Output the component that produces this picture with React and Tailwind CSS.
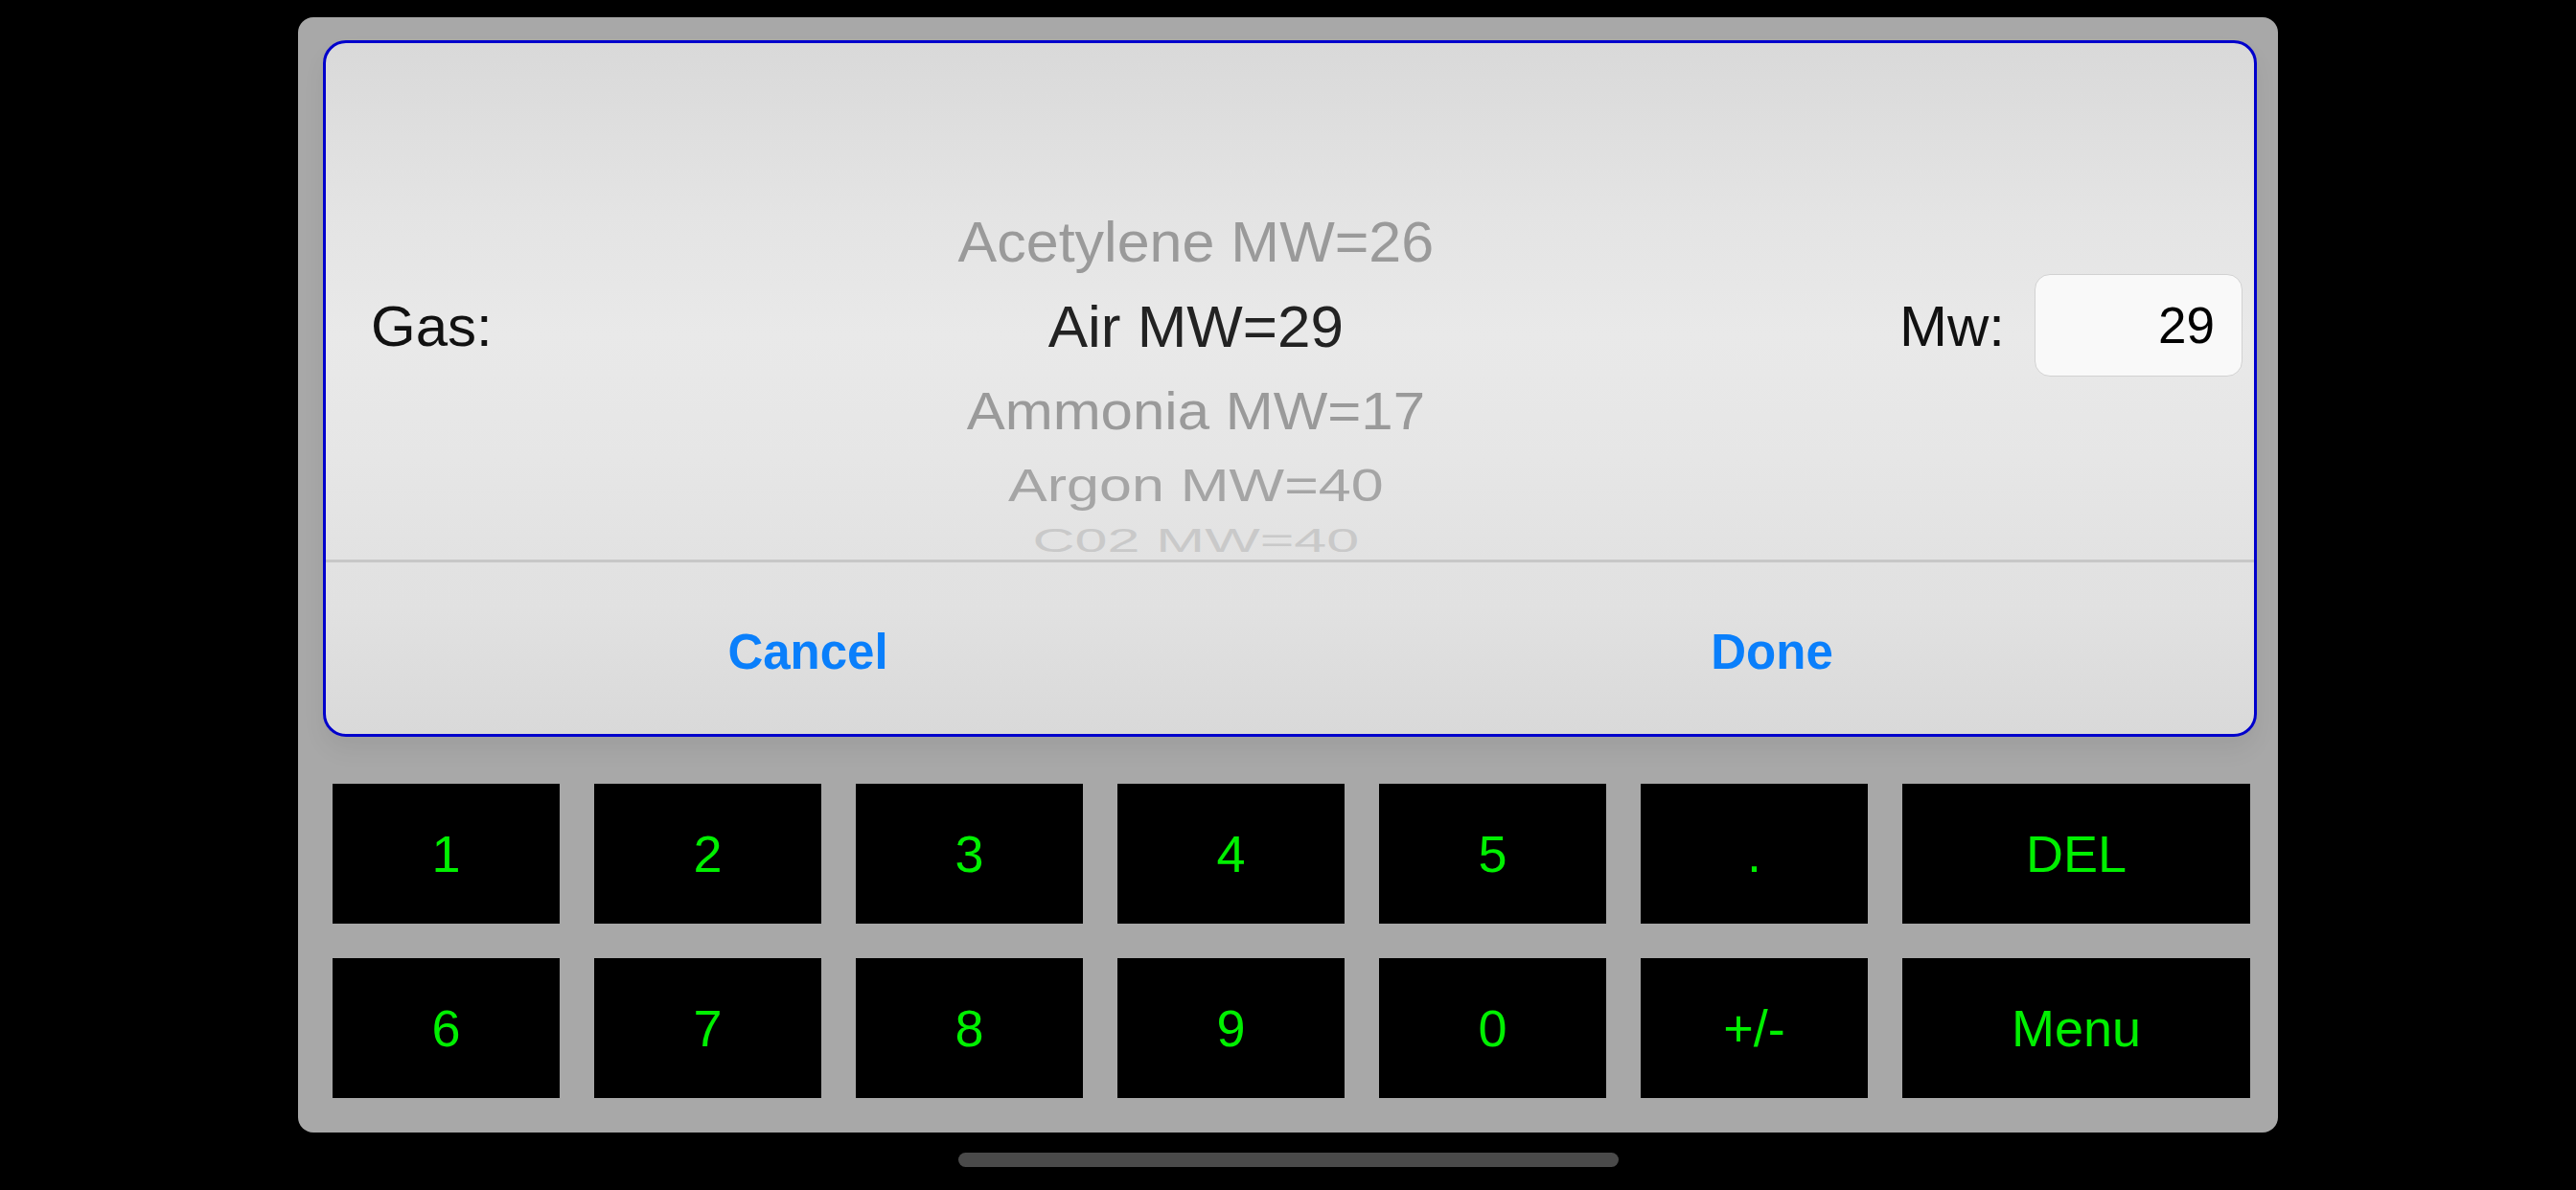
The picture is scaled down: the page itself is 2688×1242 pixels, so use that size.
import { useState } from 'react'

const FONT = { fontFamily: '"Liberation Sans", Arial, sans-serif' }

// wheel rows below/above the selected one get squashed, like the iOS picker
const GASES = [
  { label: 'Acetylene MW=26', h: 'h-[89px] leading-[89px]', text: 'text-[61px] text-[#9a9a9a] scale-y-[0.97] translate-y-[2px]' },
  { label: 'Air MW=29', h: 'h-[89px] leading-[89px]', text: 'text-[62px] text-[#222222]' },
  { label: 'Ammonia MW=17', h: 'h-[82px] leading-[82px]', text: 'text-[60px] text-[#9a9a9a] scale-y-[0.94] translate-y-[3px]' },
  { label: 'Argon MW=40', h: 'h-[68px] leading-[68px]', text: 'text-[61px] text-[#a5a5a5] scale-y-[0.8] translate-y-[5px]' },
  { label: 'C02 MW=40', h: 'h-[49px] leading-[49px]', text: 'text-[61px] text-[#c9c9c9] scale-y-[0.58] translate-y-[5px]' },
]

const ROWS = [
  ['1', '2', '3', '4', '5', '.', 'DEL'],
  ['6', '7', '8', '9', '0', '+/-', 'Menu'],
]

function Key({ label, wide }) {
  return (
    <button
      className={`${wide ? 'w-[363px]' : 'w-[237px]'} h-[146px] bg-black text-[#00f000] text-[54px] flex items-center justify-center`}
      style={FONT}
    >
      {label}
    </button>
  )
}

export default function App() {
  const [mw, setMw] = useState('29')

  return (
    <div className="w-[2688px] h-[1242px] bg-black flex flex-col items-center pt-[18px]" style={FONT}>
      <div className="w-[2066px] h-[1164px] rounded-[16px] bg-[#a8a8a8] pl-[26px] pt-[24px]">
        {/* picker sheet */}
        <div className="w-[2018px] h-[727px] rounded-[24px] border-[3px] border-[#0000cc] overflow-hidden flex flex-col bg-[linear-gradient(to_bottom,#d9d9d9_0%,#e4e4e4_25%,#e9e9e9_42%,#e6e6e6_60%,#e2e2e2_75%,#e1e1e1_82%,#d9d9d9_100%)] shadow-[0_14px_24px_rgba(0,0,0,0.06)]">
          <div className="h-[539px] flex overflow-hidden">
            <div className="pl-[47px] mt-[251px] h-[89px] leading-[89px] text-[60px] text-[#111]">Gas:</div>

            <div className="flex-1 pt-[162px] flex flex-col items-center">
              {GASES.map(g => (
                <div key={g.label} className={`${g.h} whitespace-nowrap`}>
                  <span className={`inline-block ${g.text}`}>{g.label}</span>
                </div>
              ))}
            </div>

            <div className="mt-[251px] h-[89px] leading-[89px] text-[60px] text-[#111]">Mw:</div>
            <input
              value={mw}
              onChange={e => setMw(e.target.value)}
              className="ml-[31px] mr-[12px] mt-[241px] w-[217px] h-[107px] rounded-[16px] border border-[#d2d2d2] bg-[#f9f9f9] text-right pr-[28px] text-[53px] text-black outline-none"
              style={FONT}
            />
          </div>

          <div className="h-[3px] bg-[#c7c7c7]" />

          <div className="flex-1 flex pt-[10px]">
            <button className="flex-1 text-[51px] font-bold text-[#0a7ffb]">Cancel</button>
            <button className="flex-1 text-[51px] font-bold text-[#0a7ffb]">Done</button>
          </div>
        </div>

        {/* keypad */}
        <div className="mt-[49px] ml-[10px] flex flex-col gap-[36px]">
          {ROWS.map((row, i) => (
            <div key={i} className="flex gap-[36px]">
              {row.map((k, j) => (
                <Key key={k} label={k} wide={j === row.length - 1} />
              ))}
            </div>
          ))}
        </div>
      </div>

      <div className="mt-[21px] w-[689px] h-[15px] rounded-full bg-[#4a4a4a]" />
    </div>
  )
}
